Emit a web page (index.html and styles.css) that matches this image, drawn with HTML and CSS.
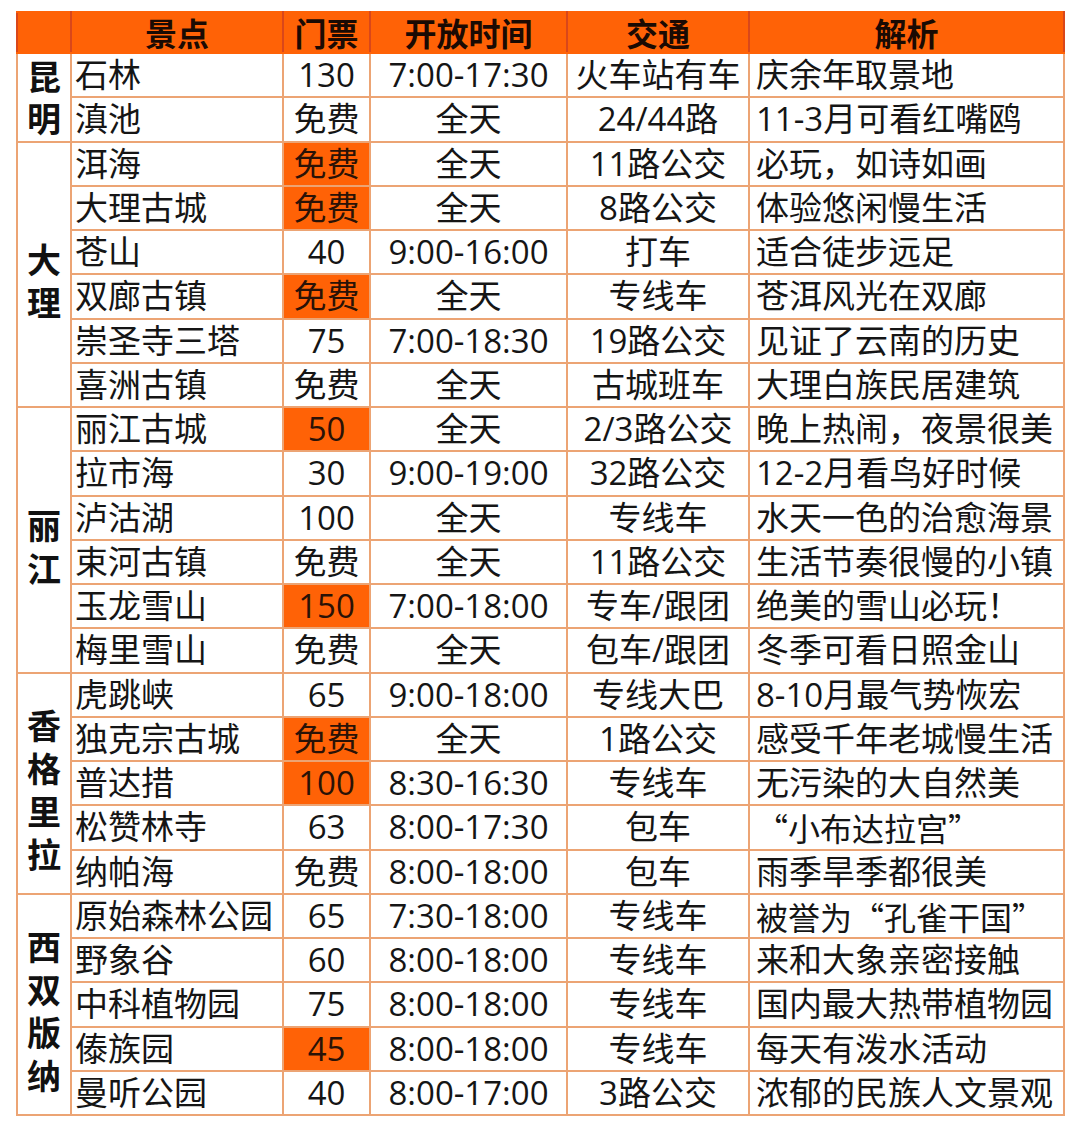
FILE: index.html
```html
<!DOCTYPE html>
<html lang="zh-CN">
<head>
<meta charset="utf-8">
<title>云南景点</title>
<link rel="stylesheet" href="styles.css">
</head>
<body>
<table class="tbl">
<colgroup>
<col class="c-region"><col class="c-name"><col class="c-price"><col class="c-time"><col class="c-traffic"><col class="c-note">
</colgroup>
<thead>
<tr class="head"><th></th><th>景点</th><th>门票</th><th>开放时间</th><th>交通</th><th>解析</th></tr>
</thead>
<tbody>
<tr><td class="region region-short" rowspan="2">昆明</td><td class="name">石林</td><td class="ctr">130</td><td class="ctr">7:00-17:30</td><td class="ctr">火车站有车</td><td class="note">庆余年取景地</td></tr>
<tr><td class="name">滇池</td><td class="ctr">免费</td><td class="ctr">全天</td><td class="ctr">24/44路</td><td class="note">11-3月可看红嘴鸥</td></tr>
<tr><td class="region" rowspan="6">大理</td><td class="name">洱海</td><td class="ctr hl">免费</td><td class="ctr">全天</td><td class="ctr">11路公交</td><td class="note">必玩，如诗如画</td></tr>
<tr><td class="name">大理古城</td><td class="ctr hl">免费</td><td class="ctr">全天</td><td class="ctr">8路公交</td><td class="note">体验悠闲慢生活</td></tr>
<tr><td class="name">苍山</td><td class="ctr">40</td><td class="ctr">9:00-16:00</td><td class="ctr">打车</td><td class="note">适合徒步远足</td></tr>
<tr><td class="name">双廊古镇</td><td class="ctr hl">免费</td><td class="ctr">全天</td><td class="ctr">专线车</td><td class="note">苍洱风光在双廊</td></tr>
<tr><td class="name">崇圣寺三塔</td><td class="ctr">75</td><td class="ctr">7:00-18:30</td><td class="ctr">19路公交</td><td class="note">见证了云南的历史</td></tr>
<tr><td class="name">喜洲古镇</td><td class="ctr">免费</td><td class="ctr">全天</td><td class="ctr">古城班车</td><td class="note">大理白族民居建筑</td></tr>
<tr><td class="region" rowspan="6">丽江</td><td class="name">丽江古城</td><td class="ctr hl">50</td><td class="ctr">全天</td><td class="ctr">2/3路公交</td><td class="note">晚上热闹，夜景很美</td></tr>
<tr><td class="name">拉市海</td><td class="ctr">30</td><td class="ctr">9:00-19:00</td><td class="ctr">32路公交</td><td class="note">12-2月看鸟好时候</td></tr>
<tr><td class="name">泸沽湖</td><td class="ctr">100</td><td class="ctr">全天</td><td class="ctr">专线车</td><td class="note">水天一色的治愈海景</td></tr>
<tr><td class="name">束河古镇</td><td class="ctr">免费</td><td class="ctr">全天</td><td class="ctr">11路公交</td><td class="note">生活节奏很慢的小镇</td></tr>
<tr><td class="name">玉龙雪山</td><td class="ctr hl">150</td><td class="ctr">7:00-18:00</td><td class="ctr">专车/跟团</td><td class="note">绝美的雪山必玩！</td></tr>
<tr><td class="name">梅里雪山</td><td class="ctr">免费</td><td class="ctr">全天</td><td class="ctr">包车/跟团</td><td class="note">冬季可看日照金山</td></tr>
<tr><td class="region" rowspan="5">香格里拉</td><td class="name">虎跳峡</td><td class="ctr">65</td><td class="ctr">9:00-18:00</td><td class="ctr">专线大巴</td><td class="note">8-10月最气势恢宏</td></tr>
<tr><td class="name">独克宗古城</td><td class="ctr hl">免费</td><td class="ctr">全天</td><td class="ctr">1路公交</td><td class="note">感受千年老城慢生活</td></tr>
<tr><td class="name">普达措</td><td class="ctr hl">100</td><td class="ctr">8:30-16:30</td><td class="ctr">专线车</td><td class="note">无污染的大自然美</td></tr>
<tr><td class="name">松赞林寺</td><td class="ctr">63</td><td class="ctr">8:00-17:30</td><td class="ctr">包车</td><td class="note cjk">“小布达拉宫”</td></tr>
<tr><td class="name">纳帕海</td><td class="ctr">免费</td><td class="ctr">8:00-18:00</td><td class="ctr">包车</td><td class="note">雨季旱季都很美</td></tr>
<tr><td class="region" rowspan="5">西双版纳</td><td class="name">原始森林公园</td><td class="ctr">65</td><td class="ctr">7:30-18:00</td><td class="ctr">专线车</td><td class="note cjk">被誉为“孔雀干国”</td></tr>
<tr><td class="name">野象谷</td><td class="ctr">60</td><td class="ctr">8:00-18:00</td><td class="ctr">专线车</td><td class="note">来和大象亲密接触</td></tr>
<tr><td class="name">中科植物园</td><td class="ctr">75</td><td class="ctr">8:00-18:00</td><td class="ctr">专线车</td><td class="note">国内最大热带植物园</td></tr>
<tr><td class="name">傣族园</td><td class="ctr hl">45</td><td class="ctr">8:00-18:00</td><td class="ctr">专线车</td><td class="note">每天有泼水活动</td></tr>
<tr><td class="name">曼听公园</td><td class="ctr">40</td><td class="ctr">8:00-17:00</td><td class="ctr">3路公交</td><td class="note">浓郁的民族人文景观</td></tr>
</tbody>
</table>
</body>
</html>
```
FILE: styles.css
```css
html, body {
  margin: 0;
  padding: 0;
  background: #ffffff;
}
body {
  padding: 11px 0 0 16px;
  font-family: "Open Sans", "Noto Sans CJK SC", sans-serif;
  color: #151515;
}
.tbl {
  border-collapse: collapse;
  table-layout: fixed;
  width: 1047px;
}
.c-region { width: 54px; }
.c-name { width: 212px; }
.c-price { width: 87px; }
.c-time { width: 197px; }
.c-traffic { width: 182px; }
.c-note { width: 315px; }

.tbl td, .tbl th {
  border: 2px solid #eca474;
  padding: 0;
  overflow: visible;
  white-space: nowrap;
}
.tbl .head th {
  height: 39px;
  background: #ff6206;
  border-color: #ff6206 #d9471a #ff6206 #d9471a;
  font-family: "Noto Sans CJK SC", sans-serif;
  font-size: 32px;
  font-weight: 700;
  color: #1a0a03;
  text-align: center;
  line-height: 39px;
  vertical-align: middle;
}
.tbl tbody tr {
  height: 44.25px;
}
.tbl tbody td {
  font-size: 33px;
  line-height: 40px;
  vertical-align: middle;
}
.name {
  text-align: left;
  padding-left: 3px !important;
}
.ctr {
  text-align: center;
}
.note {
  text-align: left;
  padding-left: 6px !important;
}
.cjk {
  font-family: "Noto Sans CJK SC", sans-serif;
  font-size: 32px !important;
}
.hl {
  background: #ff6206;
  color: #2a1206;
}
.region {
  white-space: normal !important;
  text-align: center;
  font-family: "Noto Sans CJK SC", sans-serif;
  font-weight: 700;
  font-size: 34px !important;
  line-height: 43px !important;
  padding: 12px 7px 0 !important;
  word-break: break-all;
  color: #111;
}
.tbl .region-short {
  padding-top: 0 !important;
  line-height: 42px !important;
}
```
